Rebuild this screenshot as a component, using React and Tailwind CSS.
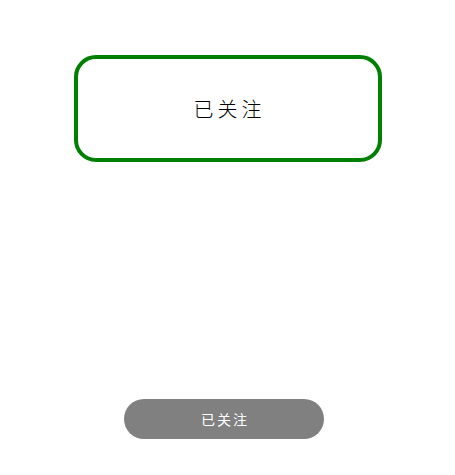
export default function App() {
  return (
    <div
      className="w-[455px] h-[475px] bg-white"
      style={{ fontFamily: '"Noto Sans CJK SC", sans-serif' }}
    >
      <div className="pt-[55px] flex justify-center">
        <div className="w-[308px] h-[107px] border-4 border-[#008000] rounded-[22px] flex items-center justify-center">
          <span className="text-[20px] tracking-[4px] text-black font-light pl-[4px]">已关注</span>
        </div>
      </div>
      <div className="mt-[237px] ml-[124px] w-[200px] h-[40px] rounded-full bg-[#808080] flex items-center justify-center">
        <span className="text-[14px] tracking-[2px] text-white pl-[2px]">已关注</span>
      </div>
    </div>
  );
}
